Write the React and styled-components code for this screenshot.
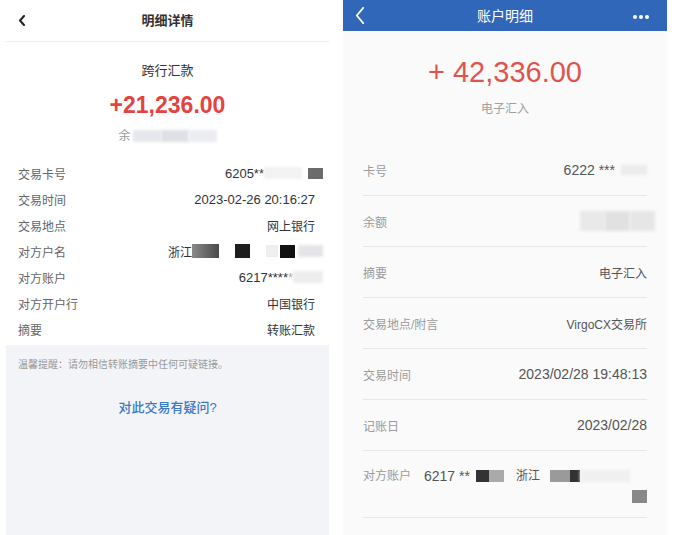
import React from 'react';
import styled, { createGlobalStyle } from 'styled-components';

const GlobalStyle = createGlobalStyle`
  body {
    margin: 0;
    background: #fff;
    font-family: "Liberation Sans", "Noto Sans CJK SC", sans-serif;
  }
`

const Page = styled.div`
  display: flex;
  width: 680px;
  height: 535px;
  overflow: hidden;
  background: #fff;
`

// ---- left screenshot ----

const LeftPanel = styled.div`
  display: flex;
  flex-direction: column;
  width: 323px;
  margin-left: 6px;
  background: #fff;
`

const LeftHeader = styled.div`
  display: grid;
  grid-template-columns: 40px 1fr 40px;
  align-items: center;
  height: 41px;
  border-bottom: 1px solid #efefef;
`

const BackCell = styled.div`
  display: flex;
  align-items: center;
  padding-left: ${p => p.$pad}px;
`

const LeftTitle = styled.div`
  text-align: center;
  font-size: 13px;
  line-height: 18px;
  font-weight: 600;
  color: #333;
`

const Summary = styled.div`
  display: flex;
  flex-direction: column;
  align-items: center;
  padding-top: 20px;
`

const Kind = styled.div`
  font-size: 13px;
  line-height: 18px;
  color: #333;
`

const Amount = styled.div`
  margin-top: 11px;
  font-size: 23px;
  line-height: 28px;
  font-weight: 700;
  color: #e4433f;
`

const Balance = styled.div`
  display: flex;
  align-items: center;
  margin-top: 9px;
  font-size: 12px;
  line-height: 16px;
  color: #999;
`

const InfoList = styled.div`
  margin-top: 16px;
  padding-bottom: 3px;
`

const InfoRow = styled.div`
  display: flex;
  justify-content: space-between;
  align-items: center;
  height: 26px;
  padding: 0 14px 0 12px;
  font-size: 12px;
`

const InfoLabel = styled.span`
  color: #666;
`

const InfoValue = styled.span`
  display: flex;
  align-items: center;
  color: #333;
  font-size: ${p => (p.$num ? 13 : 12)}px;
  margin-right: ${p => (p.$bleed ? -8 : 0)}px;
`

const Notice = styled.div`
  flex: 1;
  display: flex;
  flex-direction: column;
  background: #f3f4f7;
  padding: 13px 12px 0;
`

const NoticeText = styled.div`
  font-size: 10px;
  line-height: 14px;
  color: #9a9a9a;
`

const AskLink = styled.a`
  margin-top: 27px;
  text-align: center;
  font-size: 13px;
  line-height: 18px;
  font-weight: 500;
  color: #3a78c8;
  text-decoration: none;
`

// blurred-out bits of the screenshots
const Patch = styled.span`
  display: inline-block;
  width: ${p => p.$w}px;
  height: ${p => p.$h || 12}px;
  margin-left: ${p => p.$ml || 0}px;
  background: ${p => p.$c};
  filter: blur(${p => (p.$soft ? 1.5 : 0.6)}px);
`

// ---- right screenshot ----

const RightPanel = styled.div`
  display: flex;
  flex-direction: column;
  width: 324px;
  margin-left: 14px;
  background: #fafafa;
`

const BlueBar = styled.div`
  display: grid;
  grid-template-columns: 40px 1fr 40px;
  align-items: center;
  height: 31px;
  background: #3067b9;
  color: #fff;
`

const BarTitle = styled.div`
  text-align: center;
  font-size: 14px;
  line-height: 18px;
`

const Dots = styled.div`
  display: flex;
  gap: 2px;
  padding-left: 6px;
  padding-top: 2px;

  & > i {
    width: 4px;
    height: 4px;
    border-radius: 50%;
    background: #fff;
  }
`

const AmountBlock = styled.div`
  display: flex;
  flex-direction: column;
  align-items: center;
  padding: 24px 0 28px;
`

const BigAmount = styled.div`
  font-size: 29px;
  line-height: 34px;
  color: #e2534d;
`

const SubKind = styled.div`
  margin-top: 12px;
  font-size: 12px;
  line-height: 16px;
  color: #a0a0a0;
`

const DetailList = styled.div`
  padding: 0 20px;
`

const DetailRow = styled.div`
  display: flex;
  justify-content: space-between;
  align-items: center;
  height: 50px;
  border-bottom: 1px solid #e7e7e7;
  font-size: 12px;
`

const PartyRow = styled.div`
  display: flex;
  align-items: flex-start;
  height: 49px;
  padding-top: 17px;
  border-bottom: 1px solid #e7e7e7;
  font-size: 12px;
  line-height: 16px;
`

const DetailLabel = styled.span`
  color: #9b9b9b;
`

const DetailValue = styled.span`
  display: flex;
  align-items: center;
  color: #555;
  font-size: ${p => (p.$num ? 14 : 12)}px;
  margin-right: ${p => (p.$bleed ? -8 : 0)}px;
`

const PartyValue = styled.div`
  flex: 1;
  display: flex;
  flex-direction: column;
  margin-left: 13px;
  color: #555;
`

const PartyLine = styled.div`
  display: flex;
  align-items: center;
  font-size: ${p => (p.$num ? 14 : 12)}px;
`

const Corner = styled.div`
  align-self: flex-end;
  margin-top: 6px;
`

const Chevron = ({ color, w, h, sw }) => (
  <svg width={w} height={h} viewBox={`0 0 ${w} ${h}`} fill="none">
    <polyline
      points={`${w - sw},${sw / 2} ${sw},${h / 2} ${w - sw},${h - sw / 2}`}
      stroke={color}
      strokeWidth={sw}
      strokeLinecap="round"
      strokeLinejoin="round"
    />
  </svg>
)

const leftRows = [
  ['交易卡号', 'card'],
  ['交易时间', '2023-02-26 20:16:27', true],
  ['交易地点', '网上银行'],
  ['对方户名', 'name'],
  ['对方账户', 'account'],
  ['对方开户行', '中国银行'],
  ['摘要', '转账汇款'],
]

const renderLeftValue = (value, num) => {
  if (value === 'card') {
    return (
      <InfoValue $bleed $num>
        6205**
        <Patch $w={38} $c="#f2f2f2" $soft />
        <Patch $w={15} $h={11} $ml={6} $c="#6b6b6b" />
      </InfoValue>
    )
  }
  if (value === 'name') {
    return (
      <InfoValue $bleed>
        浙江
        <Patch $w={27} $h={14} $c="linear-gradient(90deg,#8a8a8a,#4a4a4a)" />
        <Patch $w={15} $h={14} $ml={16} $c="#1e1e1e" />
        <Patch $w={12} $h={12} $ml={16} $c="#efefef" />
        <Patch $w={15} $h={13} $ml={2} $c="#111" />
        <Patch $w={25} $h={12} $ml={3} $c="#e4e4e9" $soft />
      </InfoValue>
    )
  }
  if (value === 'account') {
    return (
      <InfoValue $bleed $num>
        6217****<span style={{ color: '#aaa' }}>*</span>
        <Patch $w={30} $c="#ededed" $soft />
      </InfoValue>
    )
  }
  return <InfoValue $num={num}>{value}</InfoValue>
}

const rightRows = [
  ['卡号', 'card'],
  ['余额', 'balance'],
  ['摘要', '电子汇入'],
  ['交易地点/附言', 'VirgoCX交易所'],
  ['交易时间', '2023/02/28 19:48:13', true],
  ['记账日', '2023/02/28', true],
]

const renderRightValue = (value, num) => {
  if (value === 'card') {
    return (
      <DetailValue $num>
        6222 ***
        <Patch $w={26} $h={10} $ml={6} $c="#ececec" $soft />
      </DetailValue>
    )
  }
  if (value === 'balance') {
    return (
      <DetailValue $bleed>
        <Patch $w={25} $h={20} $c="#e9e9e9" $soft />
        <Patch $w={25} $h={20} $c="#e1e1e1" $soft />
        <Patch $w={25} $h={20} $c="#e6e6e6" $soft />
      </DetailValue>
    )
  }
  return <DetailValue $num={num}>{value}</DetailValue>
}

export default function App() {
  return (
    <>
      <GlobalStyle />
      <Page>
        <LeftPanel>
          <LeftHeader>
            <BackCell $pad={12}>
              <Chevron color="#222" w={8} h={11} sw={2} />
            </BackCell>
            <LeftTitle>明细详情</LeftTitle>
            <div />
          </LeftHeader>

          <Summary>
            <Kind>跨行汇款</Kind>
            <Amount>+21,236.00</Amount>
            <Balance>
              余
              <Patch $w={28} $ml={2} $c="#e6e7ec" $soft />
              <Patch $w={28} $c="#dfe0e6" $soft />
              <Patch $w={28} $c="#ebecf0" $soft />
            </Balance>
          </Summary>

          <InfoList>
            {leftRows.map(([label, value, num]) => (
              <InfoRow key={label}>
                <InfoLabel>{label}</InfoLabel>
                {renderLeftValue(value, num)}
              </InfoRow>
            ))}
          </InfoList>

          <Notice>
            <NoticeText>温馨提醒：请勿相信转账摘要中任何可疑链接。</NoticeText>
            <AskLink>对此交易有疑问?</AskLink>
          </Notice>
        </LeftPanel>

        <RightPanel>
          <BlueBar>
            <BackCell $pad={12}>
              <Chevron color="#fff" w={10} h={17} sw={1.8} />
            </BackCell>
            <BarTitle>账户明细</BarTitle>
            <Dots>
              <i />
              <i />
              <i />
            </Dots>
          </BlueBar>

          <AmountBlock>
            <BigAmount>+ 42,336.00</BigAmount>
            <SubKind>电子汇入</SubKind>
          </AmountBlock>

          <DetailList>
            {rightRows.map(([label, value, num]) => (
              <DetailRow key={label}>
                <DetailLabel>{label}</DetailLabel>
                {renderRightValue(value, num)}
              </DetailRow>
            ))}
            <PartyRow>
              <DetailLabel>对方账户</DetailLabel>
              <PartyValue>
                <PartyLine $num>
                  6217 **
                  <Patch $w={13} $h={12} $ml={6} $c="#333" />
                  <Patch $w={15} $h={12} $c="#aaa" />
                  <PartyLine as="span" style={{ marginLeft: 12 }}>浙江</PartyLine>
                  <Patch $w={20} $h={12} $ml={10} $c="#9a9a9a" />
                  <Patch $w={10} $h={12} $c="#333" />
                  <Patch $w={50} $h={12} $c="#f0f0f0" $soft />
                </PartyLine>
                <Corner>
                  <Patch $w={15} $h={13} $c="#888" />
                </Corner>
              </PartyValue>
            </PartyRow>
          </DetailList>
        </RightPanel>
      </Page>
    </>
  )
}
